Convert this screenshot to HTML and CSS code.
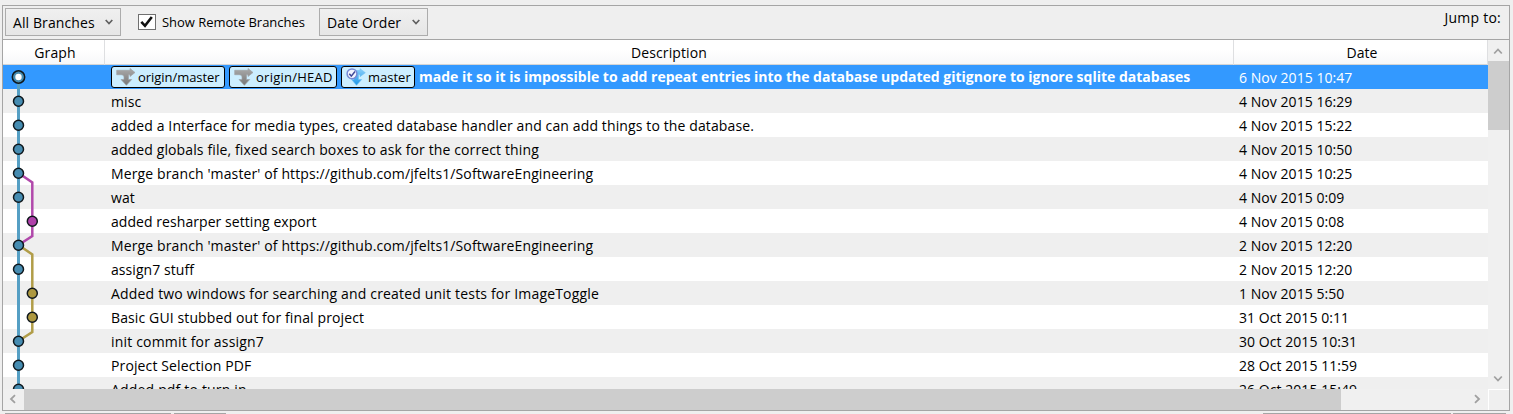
FILE: index.html
```html
<!DOCTYPE html>
<html lang="en">
<head>
<meta charset="utf-8">
<title>Commit history</title>
<link rel="stylesheet" href="styles.css">
</head>
<body>
<svg class="defs" width="0" height="0">
  <defs>
    <linearGradient id="gray" x1="0" y1="0" x2="0" y2="1"><stop offset="0" stop-color="#aaa"/><stop offset="1" stop-color="#777"/></linearGradient>
    <linearGradient id="sky" x1="0" y1="0" x2="0" y2="1"><stop offset="0" stop-color="#8bd0fa"/><stop offset="1" stop-color="#1c96e8"/></linearGradient>
    <symbol id="remote" viewBox="0 0 20 18"><path d="M.7 2.300H14V.5l5 4-5 4V6.700h-1.500V11.500h3.200L10.400 17.300 5 11.500h3V9.500C8 7.500 7 6.700 5 6.700H.7z" fill="url(#gray)" stroke="#a0a4a6" stroke-width=".7"/></symbol>
    <symbol id="local" viewBox="0 0 20 18"><path d="M8 2.500h6V.7l5.300 4-5.300 4V6.500h-1.500V11.500h3.200L10.500 17.300 5.500 11.500H8z" fill="url(#sky)" stroke="#70c1f3" stroke-width=".6"/><circle cx="6" cy="5.800" r="4.900" fill="#f2f5ff" stroke="#7589d5" stroke-width="1.500"/><path d="M3.300 5.800l2 2.300L9 3.500" fill="none" stroke="#3e4796" stroke-width="1.500"/></symbol>
  </defs>
</svg>
<main class="panel">
  <div class="toolbar">
    <div class="select branches"><span>All Branches</span><svg width="8" height="6"><path d="M.7 1L4 4.500 7.300 1"/></svg></div>
    <div class="check"><svg width="18" height="16"><rect x=".5" y=".5" width="17" height="15"/><path d="M3.300 7.800L7 11.800 13.800 3"/></svg><span>Show Remote Branches</span></div>
    <div class="select order"><span>Date Order</span><svg width="8" height="6"><path d="M.7 1L4 4.500 7.300 1"/></svg></div>
    <div class="jump">Jump to:</div>
  </div>
  <div class="body">
    <div class="list">
      <div class="head"><div>Graph</div><div>Description</div><div>Date</div></div>
      <div class="rows">
        <div class="row selected"><div class="desc"><span class="tag t1"><svg width="20" height="18"><use href="#remote"/></svg><span>origin/master</span></span><span class="tag t2"><svg width="20" height="18"><use href="#remote"/></svg><span>origin/HEAD</span></span><span class="tag t3"><svg width="20" height="18"><use href="#local"/></svg><span>master</span></span><b>made it so it is impossible to add repeat entries into the database updated gitignore to ignore sqlite databases</b></div><div class="date">6 Nov 2015 10:47</div></div>
        <div class="row"><div class="desc">misc</div><div class="date">4 Nov 2015 16:29</div></div>
        <div class="row"><div class="desc">added a Interface for media types, created database handler and can add things to the database.</div><div class="date">4 Nov 2015 15:22</div></div>
        <div class="row"><div class="desc">added globals file, fixed search boxes to ask for the correct thing</div><div class="date">4 Nov 2015 10:50</div></div>
        <div class="row"><div class="desc">Merge branch 'master' of https://github.com/jfelts1/SoftwareEngineering</div><div class="date">4 Nov 2015 10:25</div></div>
        <div class="row"><div class="desc">wat</div><div class="date">4 Nov 2015 0:09</div></div>
        <div class="row"><div class="desc tight">added resharper setting export</div><div class="date">4 Nov 2015 0:08</div></div>
        <div class="row"><div class="desc">Merge branch 'master' of https://github.com/jfelts1/SoftwareEngineering</div><div class="date">2 Nov 2015 12:20</div></div>
        <div class="row"><div class="desc tight">assign7 stuff</div><div class="date">2 Nov 2015 12:20</div></div>
        <div class="row"><div class="desc loose">Added two windows for searching and created unit tests for ImageToggle</div><div class="date">1 Nov 2015 5:50</div></div>
        <div class="row"><div class="desc">Basic GUI stubbed out for final project</div><div class="date">31 Oct 2015 0:11</div></div>
        <div class="row"><div class="desc loose">init commit for assign7</div><div class="date">30 Oct 2015 10:31</div></div>
        <div class="row"><div class="desc">Project Selection PDF</div><div class="date">28 Oct 2015 11:59</div></div>
        <div class="row"><div class="desc loose">Added pdf to turn in</div><div class="date">26 Oct 2015 15:49</div></div>
        <svg class="graph" width="101" height="324">
          <g fill="none" stroke-width="2.500">
            <path d="M15.500 12V324" stroke="#559fc4" stroke-width="3"/>
            <path d="M15.500 108L29.300 117.500V171L15.500 180" stroke="#b149ab"/>
            <path d="M15.500 180L29.300 189.500V267L15.500 276" stroke="#b19d48"/>
          </g>
          <g fill="#468cb1" stroke="#10181d" stroke-width="1.500">
            <circle cx="15.500" cy="12" r="6.200"/><circle cx="15.500" cy="12" r="3.200" fill="#fff" stroke="none"/>
            <circle cx="15.500" cy="36.200" r="5"/><circle cx="15.500" cy="60.200" r="5"/><circle cx="15.500" cy="84.200" r="5"/>
            <circle cx="15.500" cy="108.200" r="5"/><circle cx="15.500" cy="132.200" r="5"/><circle cx="15.500" cy="180.200" r="5"/>
            <circle cx="15.500" cy="204.200" r="5"/><circle cx="15.500" cy="276.200" r="5"/><circle cx="15.500" cy="300.200" r="5"/><circle cx="15.500" cy="324.200" r="5"/>
            <circle cx="29.300" cy="156.200" r="5" fill="#b040aa"/>
            <circle cx="29.300" cy="228.200" r="5" fill="#ad9840"/><circle cx="29.300" cy="252.200" r="5" fill="#ad9840"/>
          </g>
        </svg>
      </div>
    </div>
    <div class="vbar"><svg width="21" height="21"><path d="M6.200 13.500L10 9.500 13.800 13.500"/></svg><div class="vthumb"></div><svg class="down" width="21" height="21"><path d="M6.200 8.500L10 12.500 13.800 8.500"/></svg></div>
    <div class="hbar"><svg width="21" height="21"><path d="M12 6.200L8 10 12 13.800"/></svg><div class="hthumb"></div><svg class="right" width="21" height="21"><path d="M8 6.200L12 10 8 13.800"/></svg></div>
    <div class="corner"></div>
  </div>
</main>
<footer class="below"><i class="a"></i><i class="b"></i><i class="c"></i><i class="d"></i></footer>
</body>
</html>
```
FILE: styles.css
```css
* { box-sizing: border-box; }
body { margin: 0; height: 414px; overflow: hidden; background: #efefef; color: #000; font: 14px/24px "Open Sans", "Noto Sans", sans-serif; white-space: nowrap; }
svg { display: block; flex: none; }
.defs { position: absolute; }
.panel { width: 1508px; height: 406px; margin: 5px 0 0 2px; border: 1px solid #a5a5a5; }
.toolbar { display: flex; height: 34px; border-bottom: 1px solid #a5a5a5; padding: 2px 8px 0 2px; }
.select { height: 28px; border: 1px solid #acacac; background: linear-gradient(#f0f0f0, #e6e6e6); display: flex; align-items: center; justify-content: space-between; padding: 2px 7px 0; letter-spacing: .1px; }
.select svg { margin-top: -2px; }
.select svg path { fill: none; stroke: #606060; stroke-width: 1.700; }
.branches { width: 116px; }
.order { width: 109px; }
.check { display: flex; align-items: center; height: 28px; gap: 6px; margin-left: 17px; width: 181px; font-size: 13px; letter-spacing: -.03px; }
.check rect { fill: #fff; stroke: #707070; }
.check path { fill: none; stroke: #111; stroke-width: 2.600; }
.jump { margin-left: auto; margin-top: -2px; letter-spacing: .25px; }
.body { display: grid; grid-template: 349px 21px / 1485px 21px; }
.list { overflow: hidden; }
.head { display: grid; grid-template-columns: 102px 1129px 254px; height: 25px; line-height: 25px; border-bottom: 1px solid #d5d5d5; background: linear-gradient(#fff 40%, #f7f8f9); text-align: center; letter-spacing: .1px; }
.head div { border-right: 1px solid #dedfe1; padding-left: 3px; }
.head div:nth-child(2) { padding-left: 0; }
.rows { position: relative; height: 324px; overflow: hidden; }
.row { height: 24px; display: flex; background: #fff; padding: 1px 0 0 108px; }
.row:nth-child(even) { background: #efefef; }
.row.selected { background: #3399ff; color: #fff; padding-top: 0; }
.desc { width: 1128px; display: flex; align-items: center; letter-spacing: .12px; }
.desc.tight { letter-spacing: .06px; }
.desc.loose { letter-spacing: .18px; }
.selected .desc { letter-spacing: 0; }
.date { width: 249px; letter-spacing: .05px; }
.selected .date { padding-top: 1px; }
.tag { display: flex; align-items: center; height: 22px; border: 1px solid #000; border-radius: 3px; background: #cceeff; color: #000; margin-right: 4px; padding-left: 4px; gap: 2px; font-size: 13px; }
.t1 { width: 114px; letter-spacing: -.05px; }
.t2 { width: 108px; letter-spacing: .25px; }
.t3 { width: 74px; }
.graph { position: absolute; left: 0; top: 0; }
.vbar { background: #f0f0f0; display: flex; flex-direction: column; }
.vbar path, .hbar path { fill: none; stroke: #a0a0a0; stroke-width: 1.800; }
.vthumb { height: 69px; background: #cdcdcd; }
.down { margin-top: auto; }
.hbar { background: #f0f0f0; display: flex; }
.hthumb { width: 1317px; background: #cdcdcd; }
.right { margin-left: auto; }
.corner { border: 1px solid #fff; border-width: 1px 0 0 1px; }
.below { display: flex; margin: 2px 0 0 5px; }
.below i { height: 1px; background: #a5a5a5; }
.a { width: 166px; }
.b { width: 52px; margin-left: 3px; }
.c { width: 188px; margin-left: 1037px; }
.d { width: 53px; margin-left: 2px; }
```
